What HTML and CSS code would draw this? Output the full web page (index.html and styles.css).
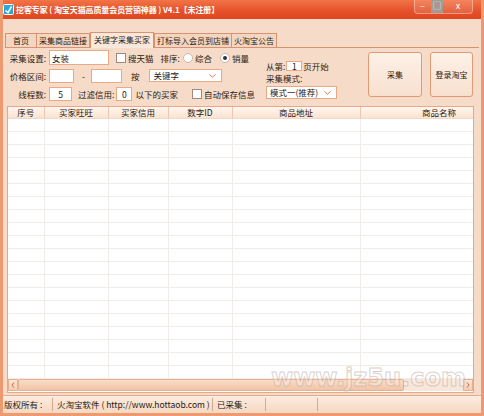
FILE: index.html
```html
<!DOCTYPE html>
<html lang="zh-CN">
  <head>
    <meta charset="UTF-8" />
    <title>挖客专家</title>
    <link rel="stylesheet" href="styles.css">
  </head>
  <body>
    <div class="window">
      <div class="titlebar">
        <svg class="app-icon" width="11" height="11" viewBox="0 0 11 11">
          <rect x="0.5" y="0.5" width="10" height="10" rx="1" fill="#2aa8d8" stroke="#fff" />
          <path d="M2.5 6.5 L5 8.5 L8.5 2.5" fill="none" stroke="#fff" stroke-width="1.5" />
        </svg>
        <span class="title">挖客专家 ( 淘宝天猫高质量会员营销神器 ) V4.1【未注册】</span>
        <div class="controls">
          <span class="ctl min">&#8211;</span>
          <span class="ctl max">&#9633;</span>
          <span class="ctl close">x</span>
        </div>
      </div>

      <div class="client">
        <div class="tabs">
          <span class="tab first">首页</span>
          <span class="tab">采集商品链接</span>
          <span class="tab active">关键字采集买家</span>
          <span class="tab">打标导入会员到店铺</span>
          <span class="tab">火淘宝公告</span>
        </div>

        <div class="panel">
          <div class="options">
            <div class="opt-left">
              <div class="row">
                <label class="lbl">采集设置:</label>
                <input class="field w-keyword" type="text" value="女装" />
                <span class="check"></span><span>搜天猫</span>
                <span class="sort-lbl">排序:</span>
                <span class="radio"></span><span class="radio-txt">综合</span>
                <span class="radio on"></span><span class="radio-txt">销量</span>
              </div>
              <div class="row">
                <label class="lbl">价格区间:</label>
                <input class="field w-price1" type="text" />
                <span class="dash">-</span>
                <input class="field w-price2" type="text" />
                <span class="by">按</span>
                <div class="select w-order">关键字<svg class="caret" width="7" height="4" viewBox="0 0 7 4"><path d="M0.5 0.5 L3.5 3.2 L6.5 0.5" fill="none" stroke="#e07850" /></svg></div>
              </div>
              <div class="row">
                <label class="lbl">线程数:</label>
                <input class="field w-thread" type="text" value="5" />
                <span class="filter-lbl">过滤信用:</span>
                <input class="field w-credit" type="text" value="0" />
                <span>以下的买家</span>
                <span class="check autosave"></span><span>自动保存信息</span>
              </div>
            </div>

            <div class="opt-mid">
              <div class="row">
                <span>从第:</span>
                <input class="field w-page" type="text" value="1" />
                <span>页开始</span>
              </div>
              <div class="mode-lbl">采集模式:</div>
              <div class="select w-mode">模式一(推荐)<svg class="caret" width="7" height="4" viewBox="0 0 7 4"><path d="M0.5 0.5 L3.5 3.2 L6.5 0.5" fill="none" stroke="#e07850" /></svg></div>
            </div>

            <button class="big-btn btn-collect">采集</button>
            <button class="big-btn btn-login">登录淘宝</button>
          </div>

          <div class="grid">
            <div class="grid-body">
              <table>
                <colgroup>
                  <col style="width:36px" />
                  <col style="width:64px" />
                  <col style="width:60px" />
                  <col style="width:64px" />
                  <col style="width:128px" />
                  <col style="width:158px" />
                </colgroup>
                <thead>
                  <tr>
                    <th>序号</th>
                    <th>买家旺旺</th>
                    <th>买家信用</th>
                    <th>数字ID</th>
                    <th>商品地址</th>
                    <th>商品名称</th>
                  </tr>
                </thead>
                <tbody id="rows"></tbody>
              </table>
            </div>
            <div class="hscroll">
              <span class="arrow">
                <svg width="8" height="10" viewBox="0 0 8 10"><path d="M5 2.5 L3 5 L5 7.5" fill="none" stroke="#c86840" /></svg>
              </span>
              <span class="thumb"></span>
              <span class="track"></span>
              <span class="arrow">
                <svg width="8" height="10" viewBox="0 0 8 10"><path d="M3 2.5 L5 5 L3 7.5" fill="none" stroke="#c86840" /></svg>
              </span>
            </div>
          </div>
        </div>
      </div>

      <div class="statusbar">
        <span class="cell c1">版权所有 :</span>
        <span class="cell c2">火淘宝软件 ( http://www.hottaob.com )</span>
        <span class="cell c3">已采集 :</span>
        <span class="cell c4"></span>
        <span class="cell"></span>
      </div>

      <div class="watermark">www.jz5u.com</div>
    </div>

    <script>
      const rows = document.getElementById("rows");
      for (let i = 0; i < 20; i++) {
        const tr = document.createElement("tr");
        tr.innerHTML = "<td></td><td></td><td></td><td></td><td></td><td></td>";
        rows.appendChild(tr);
      }
    </script>
  </body>
</html>
```

FILE: styles.css
```css
body {
  margin: 0;
  font-family: "Noto Sans CJK SC", "Liberation Sans", sans-serif;
  font-size: 8.5px;
  color: #2a1a10;
}
.window {
  width: 484px;
  height: 416px;
  box-sizing: border-box;
  display: flex;
  flex-direction: column;
  overflow: hidden;
  background: #f6dcc8;
  border: 3px solid #ee9a70;
  border-top: none;
  position: relative;
}
.titlebar {
  height: 20px;
  margin: 0 -3px;
  display: flex;
  align-items: center;
  padding-left: 3px;
  background: linear-gradient(#f27446, #e4502a 60%, #e0481f);
  position: relative;
}
.app-icon {
  flex: none;
}
.title {
  margin-left: 2px;
  color: #fff;
  font-weight: bold;
  font-size: 8px;
  letter-spacing: -0.1px;
  white-space: nowrap;
}
.controls {
  position: absolute;
  top: 0;
  right: 11px;
  display: flex;
  height: 13px;
  border: 1px solid rgba(255, 255, 255, 0.35);
  border-top: none;
  border-radius: 0 0 4px 4px;
  background: rgba(255, 255, 255, 0.12);
}
.ctl {
  text-align: center;
  color: #fff;
  font-size: 9px;
  line-height: 12px;
}
.min {
  width: 15px;
}
.max {
  width: 12px;
  margin: 0 1px;
  background: #a39a94;
  color: #e8e8e8;
}
.close {
  width: 28px;
}
.client {
  flex: 1;
  display: flex;
  flex-direction: column;
  padding: 13px 2px 0 2px;
}
.tabs {
  display: flex;
  align-items: flex-end;
  height: 15px;
}
.tab {
  height: 13px;
  line-height: 13px;
  padding: 0 2px;
  font-size: 8px;
  border: 1px solid #d99270;
  border-bottom: none;
  background: #f4d6c0;
  white-space: nowrap;
}
.tab.first {
  width: 26px;
  text-align: center;
}
.tab + .tab {
  border-left: none;
}
.tab.active {
  height: 15px;
  background: #fae8dc;
  border-left: 1px solid #d99270;
  margin-bottom: -1px;
  padding: 0 3px;
  position: relative;
}
.tab.active + .tab {
  border-left: 1px solid #d99270;
}
.panel {
  flex: 1;
  display: flex;
  flex-direction: column;
  border-top: 1px solid #d99270;
}
.options {
  display: flex;
  height: 57px;
}
.opt-left {
  display: flex;
  flex-direction: column;
  padding-top: 3px;
  gap: 4px;
}
.row {
  display: flex;
  align-items: center;
  height: 14px;
  white-space: nowrap;
}
.lbl {
  width: 41px;
  text-align: right;
  margin-right: 3px;
}
.field {
  box-sizing: border-box;
  height: 14px;
  border: 1px solid #e9a985;
  background: #fff;
  padding: 0 2px;
  font: inherit;
  color: #2a1a10;
}
.w-keyword { width: 60px; height: 15px; margin-right: 7px; }
.w-price1 { width: 25px; }
.w-price2 { width: 31px; }
.w-thread { width: 23px; text-align: center; margin-right: 6px; }
.w-credit { width: 16px; text-align: center; margin: 0 3px 0 1px; }
.w-page { width: 16px; height: 10px; text-align: center; padding: 0; margin: 0 1px; }
.check {
  width: 8px;
  height: 8px;
  border: 1px solid #9b8a80;
  background: #fff;
  margin-right: 2px;
}
.autosave {
  margin-left: 14px;
}
.sort-lbl {
  margin: 0 2px 0 7px;
}
.radio {
  width: 8px;
  height: 8px;
  border-radius: 50%;
  border: 1px solid #c8b8b0;
  background: #fff;
  margin: 0 2px 0 1px;
  position: relative;
}
.radio.on::after {
  content: "";
  position: absolute;
  left: 2px;
  top: 2px;
  width: 4px;
  height: 4px;
  border-radius: 50%;
  background: #303040;
}
.radio-txt {
  margin-right: 7px;
}
.dash {
  margin: 0 6px 0 8px;
}
.by {
  margin: 0 10px 0 9px;
}
.filter-lbl {
  margin-right: 1px;
}
.select {
  box-sizing: border-box;
  height: 13px;
  line-height: 11px;
  border: 1px solid #e9a985;
  background: #fff;
  padding-left: 3px;
  position: relative;
}
.caret {
  position: absolute;
  right: 5px;
  top: 4px;
}
.w-order { width: 73px; }
.w-mode { width: 71px; margin-top: 2px; }
.opt-mid {
  margin-left: 10px;
  padding-top: 12px;
}
.opt-mid .row {
  height: 12px;
}
.mode-lbl {
  margin-top: 1px;
  line-height: 11px;
}
.big-btn {
  box-sizing: border-box;
  height: 45px;
  margin-top: 4px;
  border: 1px solid #e09a74;
  border-radius: 3px;
  background: linear-gradient(#fdf1e8, #f8e0ce);
  font: inherit;
  font-size: 8px;
  color: #2a1a10;
  padding: 0;
  white-space: nowrap;
}
.btn-collect {
  width: 54px;
  margin-left: 31px;
}
.btn-login {
  width: 43px;
  margin-left: 8px;
}
.grid {
  flex: 1;
  display: flex;
  flex-direction: column;
  margin: 1px 5px 2px 2px;
  border: 1px solid #e8a888;
  background: #fff;
  overflow: hidden;
}
.grid-body {
  flex: 1;
  overflow: hidden;
}
table {
  width: 510px;
  table-layout: fixed;
  border-collapse: collapse;
}
th {
  height: 11px;
  padding: 0;
  font-weight: normal;
  line-height: 11px;
  background: linear-gradient(#fff6ef, #fbe2d0);
  border-right: 1px solid #e6c8b4;
  border-bottom: 1px solid #f0d8c8;
}
td {
  height: 12px;
  padding: 0;
  border-right: 1px solid #f2ece8;
  border-bottom: 1px solid #f2ece8;
}
.hscroll {
  display: flex;
  height: 12px;
  margin-bottom: 1px;
  background: #f9e6da;
}
.arrow {
  width: 10px;
  display: flex;
  align-items: center;
  justify-content: center;
  background: linear-gradient(#fbe6d8, #f4ccb4);
  border: 1px solid #e8b090;
  box-sizing: border-box;
}
.thumb {
  width: 386px;
  box-sizing: border-box;
  background: linear-gradient(#f9dcc8, #f2c4a6);
  border: 1px solid #e8b090;
  border-radius: 2px;
}
.track {
  flex: 1;
}
.watermark {
  position: absolute;
  left: 268px;
  top: 364px;
  font-family: "DejaVu Sans", sans-serif;
  font-size: 24px;
  font-weight: bold;
  color: rgba(255, 255, 255, 0.25);
  -webkit-text-stroke: 1px rgba(190, 170, 160, 0.55);
  pointer-events: none;
}
.statusbar {
  display: flex;
  height: 18px;
  margin: 0 -3px;
  padding: 0 3px;
  border-top: 1px solid #e2ae90;
  background: linear-gradient(#fcece0, #f6d8c2);
}
.cell {
  padding-left: 4px;
  border-right: 1px solid #d8a88c;
  white-space: nowrap;
  margin: 2px 0;
  line-height: 13px;
}
.cell:last-child {
  border-right: none;
  flex: 1;
}
.c1 { width: 48px; padding-left: 1px; }
.c2 { width: 155px; }
.c3 { width: 48px; }
.c4 { width: 47px; }
```
